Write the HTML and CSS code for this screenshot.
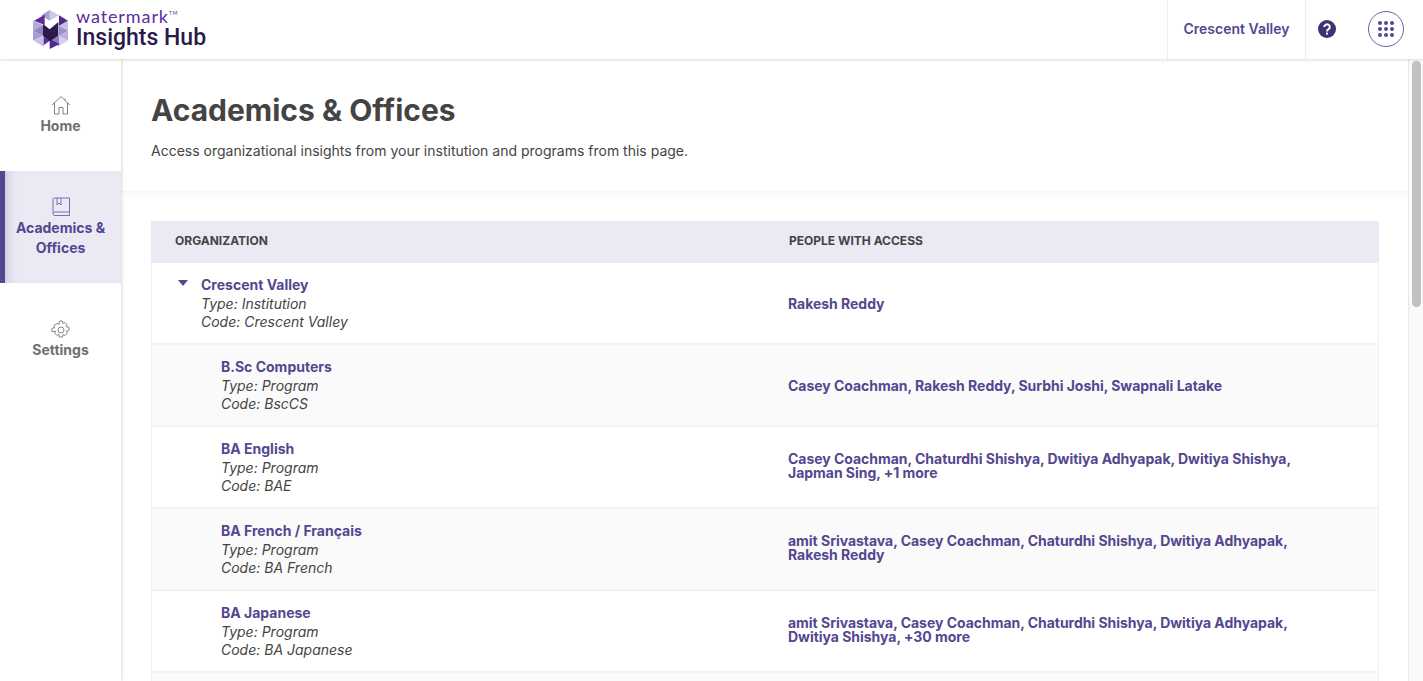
FILE: index.html
```html
<!DOCTYPE html>
<html lang="en">

<head>
    <meta charset="UTF-8">
    <title>Academics &amp; Offices</title>
    <link rel="stylesheet" href="styles.css">
</head>

<body>
    <header class="topbar">
        <div class="brand">
            <svg class="logo" width="35" height="39" viewBox="100 30 105 117">
                <polygon points="150,30 178,46 150,62" fill="#cfc6e6"/>
                <polygon points="150,30 125,46 150,62" fill="#a99cd4"/>
                <polygon points="103,62 135,44 135,75" fill="#5b2d9e"/>
                <polygon points="178,46 205,62 178,78" fill="#4f2a91"/>
                <polygon points="178,78 205,62 205,92" fill="#c9bfe3"/>
                <polygon points="100,92 130,75 130,108" fill="#8f86c0"/>
                <polygon points="100,62 130,75 100,92" fill="#b5a8da"/>
                <polygon points="178,78 205,92 178,108" fill="#9c8fcb"/>
                <polygon points="178,108 205,92 205,122" fill="#bdb0de"/>
                <polygon points="100,92 130,108 100,122" fill="#a99cd4"/>
                <polygon points="103,122 132,108 132,140" fill="#c9bfe3"/>
                <polygon points="132,110 150,122 132,136" fill="#5b2d9e"/>
                <polygon points="150,122 178,108 178,138" fill="#8f7cc4"/>
                <polygon points="178,108 205,122 178,138" fill="#d8d0ea"/>
                <polygon points="150,118 180,132 150,147" fill="#4f2a91"/>
                <polygon points="130,72 150,88 176,66 176,108 150,124 130,108" fill="#2c1a4d"/>
            </svg>
            <div class="brand-text">
                <span class="brand-top">watermark<sup>TM</sup></span>
                <span class="brand-name">Insights Hub</span>
            </div>
        </div>
        <div class="top-actions">
            <div class="top-org">Crescent Valley</div>
            <div class="top-help">
                <svg width="18" height="18" viewBox="0 0 18 18">
                    <circle cx="9" cy="9" r="9" fill="#3f3270"/>
                    <path d="M6.200 7a2.800 2.600 0 1 1 4.300 2.200c-1 .7-1.500 1-1.500 2.200" fill="none" stroke="#fff" stroke-width="2"/>
                    <rect x="8" y="12.600" width="2" height="2" fill="#fff"/>
                </svg>
            </div>
            <div class="top-apps">
                <div class="apps-circle">
                    <span></span><span></span><span></span>
                    <span></span><span></span><span></span>
                    <span></span><span></span><span></span>
                </div>
            </div>
        </div>
    </header>

    <div class="shell">
        <nav class="sidenav">
            <a class="nav-item">
                <svg width="20" height="20" viewBox="0 0 20 20" fill="none" stroke="#777" stroke-width="0.9">
                    <path d="M1 10 10 1.500 19 10M3.500 8V19H8V12.500H12V19H16.500V8M14 3.500V5.500"/>
                </svg>
                <span>Home</span>
            </a>
            <a class="nav-item active">
                <svg width="20" height="20" viewBox="0 0 20 20" fill="none" stroke="#6f5fa8" stroke-width="0.9">
                    <path d="M2 15.500V2.500A1.500 1.500 0 0 1 3.500 1H18.500V15H3.500A1.500 1.500 0 0 0 2 16.500 1.800 1.800 0 0 0 3.800 18.500H18.500V15M6 1V8L8 6 10 8V1"/>
                </svg>
                <span>Academics &amp;<br>Offices</span>
            </a>
            <a class="nav-item settings">
                <svg width="20" height="20" viewBox="0 0 20 20" fill="none" stroke="#777" stroke-width="0.9">
                    <circle cx="10" cy="10" r="3"/>
                    <path d="M8.500 1h3l.5 2.500 2-1 2.200 2.200-1 2 2.800.6v3.400l-2.800.6 1 2-2.200 2.200-2-1-.5 2.500h-3l-.5-2.500-2 1-2.200-2.200 1-2L1 11.700V8.300l2.800-.6-1-2L6 3.500l2 .8z"/>
                </svg>
                <span>Settings</span>
            </a>
        </nav>

        <main class="content">
            <section class="page-head">
                <h1>Academics &amp; Offices</h1>
                <p>Access organizational insights from your institution and programs from this page.</p>
            </section>

            <section class="table-wrap">
                <div class="table">
                    <div class="row head">
                        <div class="col-org">ORGANIZATION</div>
                        <div class="col-people">PEOPLE WITH ACCESS</div>
                    </div>
                    <div class="row">
                        <div class="col-org root">
                            <span class="caret"></span>
                            <a class="org-name">Crescent Valley</a>
                            <i>Type: Institution</i>
                            <i>Code: Crescent Valley</i>
                        </div>
                        <div class="col-people">Rakesh Reddy</div>
                    </div>
                    <div class="row alt">
                        <div class="col-org">
                            <a class="org-name">B.Sc Computers</a>
                            <i>Type: Program</i>
                            <i>Code: BscCS</i>
                        </div>
                        <div class="col-people">Casey Coachman, Rakesh Reddy, Surbhi Joshi, Swapnali Latake</div>
                    </div>
                    <div class="row">
                        <div class="col-org">
                            <a class="org-name">BA English</a>
                            <i>Type: Program</i>
                            <i>Code: BAE</i>
                        </div>
                        <div class="col-people two-line">Casey Coachman, Chaturdhi Shishya, Dwitiya Adhyapak, Dwitiya Shishya,<br>Japman Sing, +1 more</div>
                    </div>
                    <div class="row alt">
                        <div class="col-org">
                            <a class="org-name">BA French / Français</a>
                            <i>Type: Program</i>
                            <i>Code: BA French</i>
                        </div>
                        <div class="col-people two-line">amit Srivastava, Casey Coachman, Chaturdhi Shishya, Dwitiya Adhyapak,<br>Rakesh Reddy</div>
                    </div>
                    <div class="row">
                        <div class="col-org">
                            <a class="org-name">BA Japanese</a>
                            <i>Type: Program</i>
                            <i>Code: BA Japanese</i>
                        </div>
                        <div class="col-people two-line">amit Srivastava, Casey Coachman, Chaturdhi Shishya, Dwitiya Adhyapak,<br>Dwitiya Shishya, +30 more</div>
                    </div>
                    <div class="row alt"></div>
                </div>
            </section>
        </main>

        <div class="scrollbar"><div class="thumb"></div></div>
    </div>
</body>

</html>
```

FILE: styles.css
```css
* {
    box-sizing: border-box;
}

html,
body {
    height: 100%;
    margin: 0;
    overflow: hidden;
}

body {
    font-family: Inter, "Liberation Sans", sans-serif;
    font-size: 14px;
    color: #444;
    background: #fff;
    display: flex;
    flex-direction: column;
}

.topbar {
    height: 59px;
    flex: none;
    display: flex;
    justify-content: space-between;
    background: #fff;
    box-shadow: 0 1px 3px rgba(0, 0, 0, 0.15);
    position: relative;
    z-index: 2;
}

.brand {
    display: flex;
    align-items: center;
    padding: 1px 0 0 33px;
    gap: 8px;
}

.brand .logo {
    margin-top: -2px;
}

.brand-text {
    display: flex;
    flex-direction: column;
}

.brand-top {
    font-family: Lato, sans-serif;
    font-size: 18px;
    line-height: 14px;
    color: #5b2d9e;
    letter-spacing: 0.9px;
}

.brand-top sup {
    font-size: 5px;
    vertical-align: top;
    line-height: 8px;
}

.brand-name {
    margin-top: 2px;
    font-family: Roboto, sans-serif;
    font-size: 23px;
    font-weight: 500;
    line-height: 26px;
    color: #2c1a4d;
}

.top-actions {
    display: flex;
    align-items: stretch;
}

.top-org {
    width: 139px;
    padding-bottom: 2px;
    border-left: 1px solid #ededed;
    border-right: 1px solid #ededed;
    display: flex;
    align-items: center;
    justify-content: center;
    font-weight: 600;
    color: #54478f;
}

.top-help {
    width: 42px;
    padding-bottom: 1px;
    display: flex;
    align-items: center;
    justify-content: center;
}

.top-apps {
    width: 75px;
    padding: 0 0 1px 20px;
    display: flex;
    align-items: center;
}

.apps-circle {
    width: 36px;
    height: 36px;
    border: 1px solid #6f5fa8;
    border-radius: 50%;
    display: grid;
    grid-template-columns: repeat(3, 4px);
    grid-auto-rows: 4px;
    gap: 2px;
    justify-content: center;
    align-content: center;
}

.apps-circle span {
    background: #54478f;
    border-radius: 50%;
}

.shell {
    flex: 1;
    display: flex;
    min-height: 0;
}

.sidenav {
    width: 121px;
    flex: none;
    background: #fff;
    box-shadow: 1px 0 3px rgba(0, 0, 0, 0.15);
    position: relative;
    z-index: 1;
    padding-top: 24px;
}

.nav-item {
    display: flex;
    flex-direction: column;
    align-items: center;
    height: 88px;
    padding-top: 12px;
    font-weight: 700;
    line-height: 20px;
    text-align: center;
    color: #6f6f6f;
}

.nav-item svg {
    margin-bottom: 1px;
}

.nav-item.active {
    height: 112px;
    padding-top: 26px;
    margin-bottom: 24px;
    color: #54478f;
    background: #ebe9f4;
    box-shadow: inset 5px 0 0 #54478f, inset 14px 0 10px -6px rgba(84, 71, 143, 0.2);
}

.nav-item.settings {
    padding-top: 13px;
}

.nav-item.settings svg {
    margin-bottom: 0;
}

.content {
    flex: 1;
    min-width: 0;
    overflow: hidden;
    padding-left: 1px;
}

.page-head {
    height: 133px;
    padding: 34px 29px 0;
    border-bottom: 1px solid #f7f7f7;
    box-shadow: 0 3px 6px rgba(0, 0, 0, 0.03);
}

.page-head h1 {
    margin: 0;
    font-size: 30px;
    line-height: 35px;
    font-weight: 700;
    color: #444;
}

.page-head p {
    margin: 13px 0 0;
    line-height: 20px;
}

.table-wrap {
    padding: 29px 29px 0;
}

.row {
    display: flex;
    height: 82px;
    border-bottom: 2px solid #f2f2f2;
    box-shadow: inset 1px 0 #f2f2f2, inset -1px 0 #f2f2f2;
}

.row.alt {
    background: #fafafa;
}

.row.head {
    height: 42px;
    padding-bottom: 3px;
    border-bottom: 0;
    box-shadow: none;
    background: #ebe9f4;
    font-size: 12px;
    font-weight: 700;
    color: #444;
    align-items: center;
}

.col-org {
    width: 637px;
    flex: none;
    padding-left: 70px;
    position: relative;
    display: flex;
    flex-direction: column;
    justify-content: center;
    line-height: 18px;
}

.col-org.root {
    padding-left: 50px;
}

.head .col-org {
    padding-left: 24px;
}

.org-name {
    margin-bottom: 1px;
    font-weight: 700;
    color: #54478f;
}

.caret {
    position: absolute;
    left: 27px;
    top: 17px;
    border-left: 5px solid transparent;
    border-right: 5px solid transparent;
    border-top: 6px solid #54478f;
}

.col-people {
    flex: 1;
    display: flex;
    align-items: center;
    padding-top: 2px;
    font-weight: 700;
    line-height: 14px;
    letter-spacing: -0.03px;
    color: #54478f;
}

.col-people.two-line {
    padding: 0 0 2px;
}

.head .col-people {
    padding: 0 0 0 1px;
    letter-spacing: 0;
    color: #444;
}

.scrollbar {
    width: 15px;
    flex: none;
    border-left: 1px solid #e8e8e8;
    background: #fafafa;
    padding: 2px 2px 0 3px;
}

.thumb {
    height: 246px;
    background: #c1c1c1;
    border-radius: 5px;
}
```
